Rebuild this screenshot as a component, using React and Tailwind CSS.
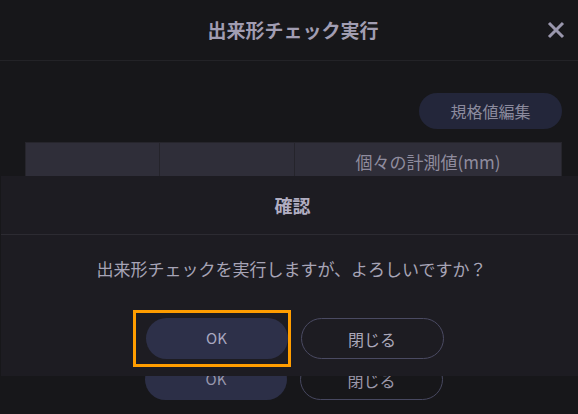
import React from "react";

export default function App() {
  return (
    <div className="relative w-[578px] h-[414px] overflow-hidden bg-[#17171a] font-['Noto_Sans_CJK_JP','Noto_Sans',sans-serif]">
      {/* Background dialog header */}
      <div className="grid h-[61px] grid-cols-[1fr_auto_1fr] items-center border-b border-[#232327]">
        <div />
        <div className="pl-[8px] pb-[1px] text-[19px] font-bold leading-none text-[#a19db2]">出来形チェック実行</div>
        <div className="flex justify-end pr-[13px]">
          <svg width="18" height="18" viewBox="0 0 18 18" className="mb-[1px]">
            <path d="M2 2 L16 16 M16 2 L2 16" stroke="#9a97ad" strokeWidth="3" strokeLinecap="butt" />
          </svg>
        </div>
      </div>

      {/* Background content */}
      <div className="pl-[25px] pr-[16px]">
        <div className="mt-[32px] flex justify-end">
          <div className="flex h-[36px] w-[143px] items-center justify-center rounded-full bg-[#23263a] text-[16px] text-[#8c8b9e]">
            規格値編集
          </div>
        </div>
        <div className="mt-[13px] grid h-[40px] grid-cols-[134px_135px_1fr] border border-[#26252c] bg-[#2f2e39]">
          <div className="border-r border-[#25242b]" />
          <div className="border-r border-[#25242b]" />
          <div className="flex items-start justify-center pt-[8px] text-[17px] leading-[22px] text-[#8f8c9e]">
            個々の計測値(mm)
          </div>
        </div>
      </div>
      <div className="mt-[177px] flex justify-center gap-[13px] pl-[10px]">
        <div className="flex h-[41px] w-[142px] items-center justify-center rounded-full bg-[#2c2f47] text-[15px] text-[#9897ad]">OK</div>
        <div className="flex h-[41px] w-[143px] items-center justify-center rounded-full border border-[#474860] text-[16px] text-[#9b98aa]">閉じる</div>
      </div>

      {/* Confirm dialog overlay */}
      <div className="absolute left-[1px] right-0 top-[176px] h-[200px] bg-[#1d1c22]">
        <div className="flex h-[58px] items-center justify-center pl-[6px] text-[18px] font-bold text-[#b1aec2]">確認</div>
        <div className="h-px bg-[#2c2b32]" />
        <div className="pt-[22px] pl-[4px] text-center text-[17px] leading-[24px] text-[#a7a4b6]">
          出来形チェックを実行しますが、よろしいですか？
        </div>
        <div className="mt-[37px] flex justify-center gap-[13px] pl-[10px]">
          <div className="flex h-[41px] w-[142px] items-center justify-center rounded-full bg-[#2d3049] text-[15px] text-[#a9a8c0]">OK</div>
          <div className="flex h-[41px] w-[143px] items-center justify-center rounded-full border border-[#4a4a62] text-[16px] text-[#aaa7b9]">閉じる</div>
        </div>
      </div>

      {/* Orange highlight annotation */}
      <div className="absolute left-[133px] top-[310px] h-[57px] w-[158px] border-[3px] border-[#ff9d00]" />
    </div>
  );
}
